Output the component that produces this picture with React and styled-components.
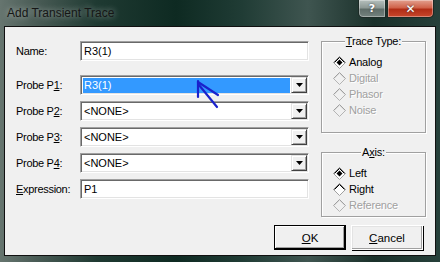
import React from "react";
import styled, { createGlobalStyle } from "styled-components";

const GlobalStyle = createGlobalStyle`
  html, body {
    margin: 0;
    padding: 0;
    background: #173029;
  }
  body {
    font-family: "Liberation Sans", Arial, sans-serif;
    font-size: 11px;
  }
`;

const Window = styled.div`
  position: relative;
  width: 440px;
  height: 262px;
  display: flex;
  flex-direction: column;
  background: linear-gradient(
    90deg,
    #66756f 0%,
    #4a5c56 8%,
    #1f3a32 22%,
    #0e2a22 40%,
    #203c35 55%,
    #3f5550 70%,
    #1a302a 85%,
    #26403a 100%
  );
  overflow: hidden;
`;

const TitleBar = styled.div`
  height: 26px;
  display: flex;
  align-items: flex-start;
  padding: 0 6px 0 7px;
`;

const Title = styled.div`
  font-size: 12px;
  color: #161616;
  margin-top: 6px;
  text-shadow: 0 0 6px rgba(255, 255, 255, 0.6);
`;

const CaptionButtons = styled.div`
  margin-left: auto;
  display: flex;
  gap: 1px;
`;

const CaptionButton = styled.div`
  height: 18px;
  width: ${(p) => p.$w}px;
  box-sizing: border-box;
  border: 1px solid #1c2a26;
  border-top: none;
  border-radius: ${(p) => (p.$close ? "0 0 5px 0" : "0 0 0 5px")};
  background: ${(p) =>
    p.$close
      ? "linear-gradient(180deg, #e3a08f 0%, #d0624a 45%, #b12d16 55%, #c8472c 100%)"
      : "linear-gradient(180deg, #b6c0bd 0%, #8d9995 45%, #5f6d69 55%, #74827e 100%)"};
  box-shadow: inset 0 0 0 1px rgba(255, 255, 255, 0.35);
  color: #fff;
  font-family: "DejaVu Sans", sans-serif;
  font-weight: bold;
  font-size: ${(p) => (p.$close ? 12 : 11)}px;
  display: flex;
  align-items: center;
  justify-content: center;
  text-shadow: 0 0 2px #333;
`;

const Client = styled.div`
  flex: 1;
  margin: 0 4px 6px 4px;
  border: 1px solid #101010;
  background: #f0f0f0;
  display: flex;
  flex-direction: column;
  color: #000;
`;

const Top = styled.div`
  display: flex;
  align-items: flex-start;
  padding: 14px 0 0 11px;
`;

const Form = styled.div`
  display: flex;
  flex-direction: column;
  gap: 6px;
  width: 293px;
`;

const Row = styled.div`
  display: grid;
  grid-template-columns: 64px 229px;
  align-items: center;
  height: 20px;
  margin-bottom: ${(p) => (p.$spaced ? 8 : 0)}px;
`;

const Label = styled.div`
  letter-spacing: -0.3px;
`;

const Field = styled.div`
  position: relative;
  height: 20px;
  box-sizing: border-box;
  background: #fff;
  border-top: 1px solid #a0a0a0;
  border-left: 1px solid #a0a0a0;
  border-bottom: 1px solid #fff;
  border-right: 1px solid #fff;
  box-shadow: inset 1px 1px 0 #696969, inset -1px -1px 0 #e3e3e3;
  display: flex;
  align-items: center;
  padding: 0 2px 0 2px;
`;

const Value = styled.div`
  flex: 1;
  height: 15px;
  line-height: 15px;
  padding-left: 1px;
  background: ${(p) => (p.$selected ? "#3399ff" : "transparent")};
  color: ${(p) => (p.$selected ? "#fff" : "#000")};
  margin-right: 1px;
`;

const DropButton = styled.div`
  width: 16px;
  height: 16px;
  box-sizing: border-box;
  background: #f0f0f0;
  border-top: 1px solid #e3e3e3;
  border-left: 1px solid #e3e3e3;
  border-right: 1px solid #404040;
  border-bottom: 1px solid #404040;
  box-shadow: inset 1px 1px 0 #fff, inset -1px -1px 0 #a0a0a0;
  display: flex;
  align-items: center;
  justify-content: center;
  margin-right: -1px;
`;

const Side = styled.div`
  margin-left: 12px;
  width: 105px;
  display: flex;
  flex-direction: column;
  gap: 19px;
`;

const Group = styled.div`
  position: relative;
  height: ${(p) => p.$h}px;
  box-sizing: border-box;
  border: 1px solid #a0a0a0;
  box-shadow: 1px 1px 0 #fff, inset 1px 1px 0 #fff;
  padding: 12px 0 0 11px;
`;

const Legend = styled.div`
  position: absolute;
  top: -7px;
  left: 0;
  right: 0;
  display: flex;
  justify-content: center;
  span {
    background: #f0f0f0;
    padding: 0 1px;
    line-height: 13px;
    letter-spacing: -0.2px;
  }
`;

const Option = styled.div`
  height: 16px;
  display: flex;
  align-items: center;
  gap: 3px;
  color: ${(p) => (p.$disabled ? "#a0a0a0" : "#000")};
  text-shadow: ${(p) => (p.$disabled ? "1px 1px 0 #fff" : "none")};
  letter-spacing: -0.2px;
`;

const Buttons = styled.div`
  display: flex;
  justify-content: flex-end;
  gap: 5px;
  padding-right: 12px;
  margin-top: 8px;
`;

const Button = styled.div`
  width: 72px;
  height: 25px;
  box-sizing: border-box;
  display: flex;
  align-items: center;
  justify-content: center;
  background: #f0f0f0;
  border: 1px solid ${(p) => (p.$default ? "#000" : "#fff")};
  box-shadow: ${(p) =>
    p.$default
      ? "inset -1px -1px 0 #000, inset 1px 1px 0 #fff, inset -2px -2px 0 #a0a0a0"
      : "1px 1px 0 #000, inset -1px -1px 0 #a0a0a0, inset 1px 1px 0 #e3e3e3"};
  font-size: 11.5px;
`;

const Arrow = styled.svg`
  position: absolute;
  left: 0;
  top: 0;
  pointer-events: none;
`;

const u = (ch) => <u>{ch}</u>;

function Diamond({ checked, disabled }) {
  return (
    <svg width="13" height="13" viewBox="0 0 13 13">
      <polygon
        points="6.5,0.5 12.5,6.5 6.5,12.5 0.5,6.5"
        fill={disabled ? "#f0f0f0" : "#fff"}
      />
      <polyline
        points="0.5,6.5 6.5,12.5 12.5,6.5"
        fill="none"
        stroke={disabled ? "#b4b4b4" : "#a0a0a0"}
      />
      <polyline
        points="0.5,6.5 6.5,0.5 12.5,6.5"
        fill="none"
        stroke={disabled ? "#a0a0a0" : "#808080"}
      />
      <polyline
        points="1.5,6.5 6.5,1.5 11.5,6.5"
        fill="none"
        stroke={disabled ? "#dcdcdc" : "#000"}
      />
      {checked && (
        <polygon points="6.5,3.5 9.5,6.5 6.5,9.5 3.5,6.5" fill="#000" />
      )}
    </svg>
  );
}

function Caret() {
  return (
    <svg width="7" height="4" viewBox="0 0 7 4">
      <polygon points="0,0 7,0 3.5,4" fill="#000" />
    </svg>
  );
}

const probes = [
  { n: "1", value: "R3(1)", selected: true },
  { n: "2", value: "<NONE>" },
  { n: "3", value: "<NONE>" },
  { n: "4", value: "<NONE>" },
];

export default function App() {
  return (
    <>
      <GlobalStyle />
      <Window>
        <TitleBar>
          <Title>Add Transient Trace</Title>
          <CaptionButtons>
            <CaptionButton $w={28}>?</CaptionButton>
            <CaptionButton $w={47} $close>
              ✕
            </CaptionButton>
          </CaptionButtons>
        </TitleBar>
        <Client>
          <Top>
            <Form>
              <Row $spaced>
                <Label>Name:</Label>
                <Field>
                  <Value>R3(1)</Value>
                </Field>
              </Row>
              {probes.map((p) => (
                <Row key={p.n}>
                  <Label>
                    Probe P{u(p.n)}:
                  </Label>
                  <Field>
                    <Value $selected={p.selected}>{p.value}</Value>
                    <DropButton>
                      <Caret />
                    </DropButton>
                  </Field>
                </Row>
              ))}
              <Row>
                <Label>{u("E")}xpression:</Label>
                <Field>
                  <Value>P1</Value>
                </Field>
              </Row>
            </Form>
            <Side>
              <Group $h={92}>
                <Legend>
                  <span>{u("T")}race Type:</span>
                </Legend>
                <Option>
                  <Diamond checked />
                  Analog
                </Option>
                <Option $disabled>
                  <Diamond disabled />
                  Digital
                </Option>
                <Option $disabled>
                  <Diamond disabled />
                  Phasor
                </Option>
                <Option $disabled>
                  <Diamond disabled />
                  Noise
                </Option>
              </Group>
              <Group $h={65}>
                <Legend>
                  <span>A{u("x")}is:</span>
                </Legend>
                <Option>
                  <Diamond checked />
                  Left
                </Option>
                <Option>
                  <Diamond />
                  Right
                </Option>
                <Option $disabled>
                  <Diamond disabled />
                  Reference
                </Option>
              </Group>
            </Side>
          </Top>
          <Buttons>
            <Button $default>{u("O")}K</Button>
            <Button>{u("C")}ancel</Button>
          </Buttons>
        </Client>
        <Arrow width="440" height="262" viewBox="0 0 440 262">
          <g
            fill="none"
            stroke="#1a22cc"
            strokeWidth="2.2"
            strokeLinecap="round"
            strokeLinejoin="round"
          >
            <path d="M198 81 L198 97" />
            <path d="M198 82 L218 95" />
            <path d="M199 85 L217 107" />
          </g>
        </Arrow>
      </Window>
    </>
  );
}
